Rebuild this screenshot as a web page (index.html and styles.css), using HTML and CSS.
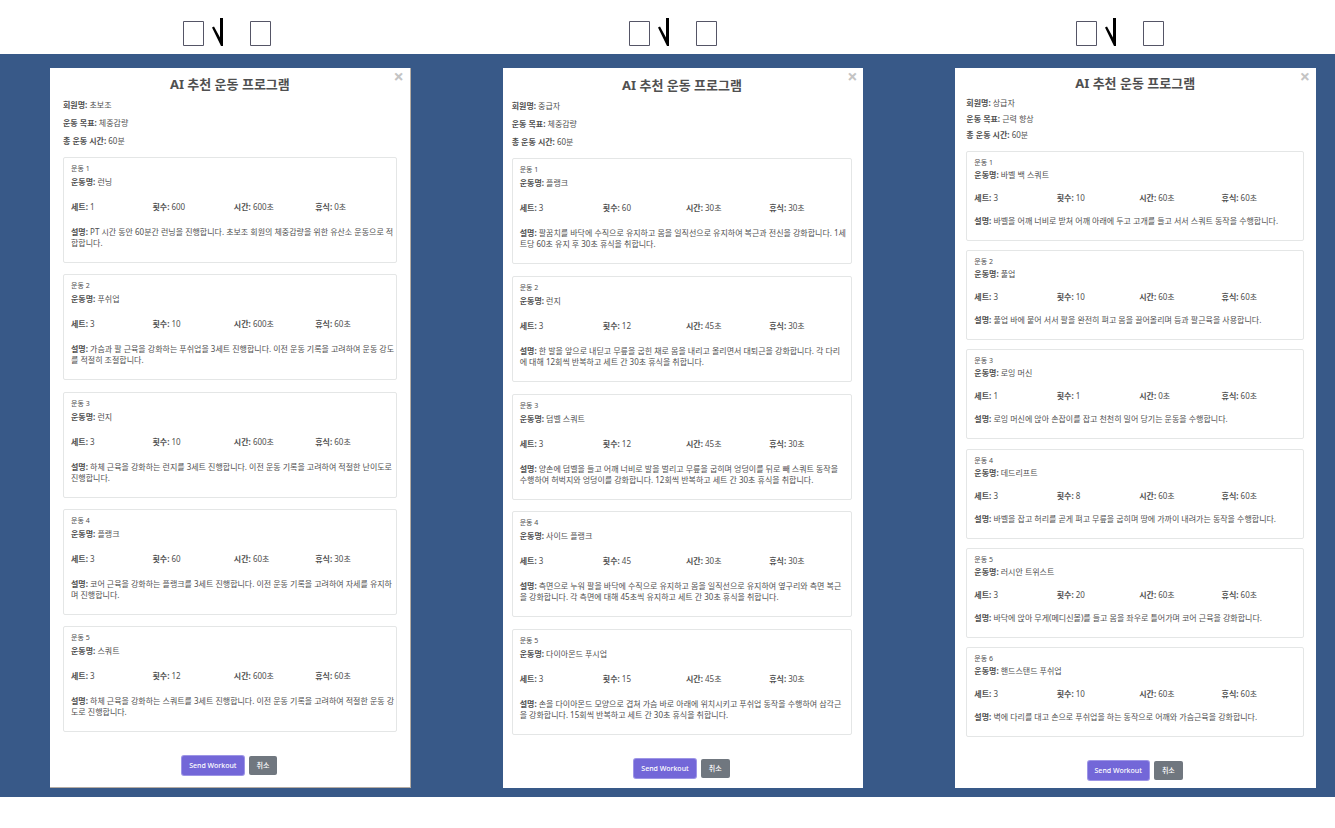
FILE: index.html
```
<!DOCTYPE html>
<html lang="ko">
<head>
  <meta charset="UTF-8" />
  <meta name="viewport" content="width=device-width, initial-scale=1.0"/>
  <title>AI 추천 운동 프로그램</title>
  <link rel="stylesheet" href="styles.css">
</head>
<body>
  <svg width="0" height="0" class="defs">
    <symbol id="level" viewBox="0 0 90 30">
      <path d="M1.5 3.5h20v24h-20zM68.5 3.5h20v24h-20z" fill="none" stroke="#555566" stroke-width="1"/>
      <path d="M30 9.500l2-1 6 11V0h3v28h-2z" fill="#000"/>
    </symbol>
  </svg>

  <header class="levels">
    <svg class="level"><use href="#level"/></svg>
    <svg class="level"><use href="#level"/></svg>
    <svg class="level"><use href="#level"/></svg>
  </header>

  <main class="board">
    <section class="modal beginner">
      <button class="close" aria-label="닫기">×</button>
      <h2>AI 추천 운동 프로그램</h2>
      <div class="info">
        <p><b>회원명:</b> 초보조</p>
        <p><b>운동 목표:</b> 체중감량</p>
        <p><b>총 운동 시간:</b> 60분</p>
      </div>
      <div class="list">
        <article class="card">
          <h3>운동 1</h3>
          <p><b>운동명:</b> 런닝</p>
          <div class="stats"><span><b>세트:</b> 1</span><span><b>횟수:</b> 600</span><span><b>시간:</b> 600초</span><span><b>휴식:</b> 0초</span></div>
          <p class="desc"><b>설명:</b> PT 시간 동안 60분간 런닝을 진행합니다. 초보조 회원의 체중감량을 위한 유산소 운동으로 적합합니다.</p>
        </article>
        <article class="card">
          <h3>운동 2</h3>
          <p><b>운동명:</b> 푸쉬업</p>
          <div class="stats"><span><b>세트:</b> 3</span><span><b>횟수:</b> 10</span><span><b>시간:</b> 600초</span><span><b>휴식:</b> 60초</span></div>
          <p class="desc"><b>설명:</b> 가슴과 팔 근육을 강화하는 푸쉬업을 3세트 진행합니다. 이전 운동 기록을 고려하여 운동 강도를 적절히 조절합니다.</p>
        </article>
        <article class="card">
          <h3>운동 3</h3>
          <p><b>운동명:</b> 런지</p>
          <div class="stats"><span><b>세트:</b> 3</span><span><b>횟수:</b> 10</span><span><b>시간:</b> 600초</span><span><b>휴식:</b> 60초</span></div>
          <p class="desc"><b>설명:</b> 하체 근육을 강화하는 런지를 3세트 진행합니다. 이전 운동 기록을 고려하여 적절한 난이도로 진행합니다.</p>
        </article>
        <article class="card">
          <h3>운동 4</h3>
          <p><b>운동명:</b> 플랭크</p>
          <div class="stats"><span><b>세트:</b> 3</span><span><b>횟수:</b> 60</span><span><b>시간:</b> 60초</span><span><b>휴식:</b> 30초</span></div>
          <p class="desc"><b>설명:</b> 코어 근육을 강화하는 플랭크를 3세트 진행합니다. 이전 운동 기록을 고려하여 자세를 유지하며 진행합니다.</p>
        </article>
        <article class="card">
          <h3>운동 5</h3>
          <p><b>운동명:</b> 스쿼트</p>
          <div class="stats"><span><b>세트:</b> 3</span><span><b>횟수:</b> 12</span><span><b>시간:</b> 600초</span><span><b>휴식:</b> 60초</span></div>
          <p class="desc"><b>설명:</b> 하체 근육을 강화하는 스쿼트를 3세트 진행합니다. 이전 운동 기록을 고려하여 적절한 운동 강도로 진행합니다.</p>
        </article>
      </div>
      <div class="actions">
        <button class="send">Send Workout</button>
        <button class="cancel">취소</button>
      </div>
    </section>

    <section class="modal middle">
      <button class="close" aria-label="닫기">×</button>
      <h2>AI 추천 운동 프로그램</h2>
      <div class="info">
        <p><b>회원명:</b> 중급자</p>
        <p><b>운동 목표:</b> 체중감량</p>
        <p><b>총 운동 시간:</b> 60분</p>
      </div>
      <div class="list">
        <article class="card">
          <h3>운동 1</h3>
          <p><b>운동명:</b> 플랭크</p>
          <div class="stats"><span><b>세트:</b> 3</span><span><b>횟수:</b> 60</span><span><b>시간:</b> 30초</span><span><b>휴식:</b> 30초</span></div>
          <p class="desc"><b>설명:</b> 팔꿈치를 바닥에 수직으로 유지하고 몸을 일직선으로 유지하여 복근과 전신을 강화합니다. 1세트당 60초 유지 후 30초 휴식을 취합니다.</p>
        </article>
        <article class="card">
          <h3>운동 2</h3>
          <p><b>운동명:</b> 런지</p>
          <div class="stats"><span><b>세트:</b> 3</span><span><b>횟수:</b> 12</span><span><b>시간:</b> 45초</span><span><b>휴식:</b> 30초</span></div>
          <p class="desc"><b>설명:</b> 한 발을 앞으로 내딛고 무릎을 굽힌 채로 몸을 내리고 올리면서 대퇴근을 강화합니다. 각 다리에 대해 12회씩 반복하고 세트 간 30초 휴식을 취합니다.</p>
        </article>
        <article class="card">
          <h3>운동 3</h3>
          <p><b>운동명:</b> 덤벨 스쿼트</p>
          <div class="stats"><span><b>세트:</b> 3</span><span><b>횟수:</b> 12</span><span><b>시간:</b> 45초</span><span><b>휴식:</b> 30초</span></div>
          <p class="desc"><b>설명:</b> 양손에 덤벨을 들고 어깨 너비로 발을 벌리고 무릎을 굽히며 엉덩이를 뒤로 빼 스쿼트 동작을 수행하여 허벅지와 엉덩이를 강화합니다. 12회씩 반복하고 세트 간 30초 휴식을 취합니다.</p>
        </article>
        <article class="card">
          <h3>운동 4</h3>
          <p><b>운동명:</b> 사이드 플랭크</p>
          <div class="stats"><span><b>세트:</b> 3</span><span><b>횟수:</b> 45</span><span><b>시간:</b> 30초</span><span><b>휴식:</b> 30초</span></div>
          <p class="desc"><b>설명:</b> 측면으로 누워 팔을 바닥에 수직으로 유지하고 몸을 일직선으로 유지하여 옆구리와 측면 복근을 강화합니다. 각 측면에 대해 45초씩 유지하고 세트 간 30초 휴식을 취합니다.</p>
        </article>
        <article class="card">
          <h3>운동 5</h3>
          <p><b>운동명:</b> 다이아몬드 푸시업</p>
          <div class="stats"><span><b>세트:</b> 3</span><span><b>횟수:</b> 15</span><span><b>시간:</b> 45초</span><span><b>휴식:</b> 30초</span></div>
          <p class="desc"><b>설명:</b> 손을 다이아몬드 모양으로 겹쳐 가슴 바로 아래에 위치시키고 푸쉬업 동작을 수행하여 삼각근을 강화합니다. 15회씩 반복하고 세트 간 30초 휴식을 취합니다.</p>
        </article>
      </div>
      <div class="actions">
        <button class="send">Send Workout</button>
        <button class="cancel">취소</button>
      </div>
    </section>

    <section class="modal advanced">
      <button class="close" aria-label="닫기">×</button>
      <h2>AI 추천 운동 프로그램</h2>
      <div class="info">
        <p><b>회원명:</b> 상급자</p>
        <p><b>운동 목표:</b> 근력 향상</p>
        <p><b>총 운동 시간:</b> 60분</p>
      </div>
      <div class="list">
        <article class="card">
          <h3>운동 1</h3>
          <p><b>운동명:</b> 바벨 백 스쿼트</p>
          <div class="stats"><span><b>세트:</b> 3</span><span><b>횟수:</b> 10</span><span><b>시간:</b> 60초</span><span><b>휴식:</b> 60초</span></div>
          <p class="desc"><b>설명:</b> 바벨을 어깨 너비로 받쳐 어깨 아래에 두고 고개를 들고 서서 스쿼트 동작을 수행합니다.</p>
        </article>
        <article class="card">
          <h3>운동 2</h3>
          <p><b>운동명:</b> 풀업</p>
          <div class="stats"><span><b>세트:</b> 3</span><span><b>횟수:</b> 10</span><span><b>시간:</b> 60초</span><span><b>휴식:</b> 60초</span></div>
          <p class="desc"><b>설명:</b> 풀업 바에 붙어 서서 팔을 완전히 펴고 몸을 끌어올리며 등과 팔근육을 사용합니다.</p>
        </article>
        <article class="card">
          <h3>운동 3</h3>
          <p><b>운동명:</b> 로잉 머신</p>
          <div class="stats"><span><b>세트:</b> 1</span><span><b>횟수:</b> 1</span><span><b>시간:</b> 0초</span><span><b>휴식:</b> 60초</span></div>
          <p class="desc"><b>설명:</b> 로잉 머신에 앉아 손잡이를 잡고 천천히 밀어 당기는 운동을 수행합니다.</p>
        </article>
        <article class="card">
          <h3>운동 4</h3>
          <p><b>운동명:</b> 데드리프트</p>
          <div class="stats"><span><b>세트:</b> 3</span><span><b>횟수:</b> 8</span><span><b>시간:</b> 60초</span><span><b>휴식:</b> 60초</span></div>
          <p class="desc"><b>설명:</b> 바벨을 잡고 허리를 곧게 펴고 무릎을 굽히며 땅에 가까이 내려가는 동작을 수행합니다.</p>
        </article>
        <article class="card">
          <h3>운동 5</h3>
          <p><b>운동명:</b> 러시안 트위스트</p>
          <div class="stats"><span><b>세트:</b> 3</span><span><b>횟수:</b> 20</span><span><b>시간:</b> 60초</span><span><b>휴식:</b> 60초</span></div>
          <p class="desc"><b>설명:</b> 바닥에 앉아 무게(메디신볼)를 들고 몸을 좌우로 틀어가며 코어 근육을 강화합니다.</p>
        </article>
        <article class="card">
          <h3>운동 6</h3>
          <p><b>운동명:</b> 핸드스탠드 푸쉬업</p>
          <div class="stats"><span><b>세트:</b> 3</span><span><b>횟수:</b> 10</span><span><b>시간:</b> 60초</span><span><b>휴식:</b> 60초</span></div>
          <p class="desc"><b>설명:</b> 벽에 다리를 대고 손으로 푸쉬업을 하는 동작으로 어깨와 가슴근육을 강화합니다.</p>
        </article>
      </div>
      <div class="actions">
        <button class="send">Send Workout</button>
        <button class="cancel">취소</button>
      </div>
    </section>
  </main>
</body>
</html>
```
FILE: styles.css
```
* { box-sizing: border-box; }
body {
  font-family: "Noto Sans", "Noto Sans CJK KR", sans-serif;
  font-size: 8px; line-height: 11px; color: #505050;
  background: white; margin: 0; padding-bottom: 31px;
  min-height: 100vh; display: flex; flex-direction: column;
}
h2, h3, p { margin: 0; }
.defs { position: absolute; }

.levels {
  display: grid; grid-template-columns: repeat(3, 1fr); gap: 16px;
  justify-items: center; padding: 18px 0 6px 12px;
}
.level { display: block; width: 90px; height: 30px; }

.board {
  flex: 1; display: grid; grid-template-columns: repeat(3, 1fr); gap: 92px;
  padding: 14px 19px 9px 50px; background: #385988;
}
.modal {
  position: relative; display: flex; flex-direction: column;
  padding: 9px 11px 9px 9px; background: white;
}
.modal h2 {
  font-size: 13px; line-height: 16px; text-align: center;
}
.close {
  position: absolute; top: 1px; right: 5px;
  width: 12px; height: 14px; padding: 0; border: none; background: none;
  font-family: inherit; font-size: 18px; font-weight: bold; line-height: 14px; color: #c4c4c4;
  cursor: pointer;
}
.info { padding: 7px 0 11px; display: grid; gap: 7px; }
.list {
  flex: 1; display: flex; flex-direction: column; justify-content: space-between;
}
.card {
  padding: 5px 7px 14px; border: 1px solid #e4e6e6; border-radius: 2px;
}
.card h3 { font-size: 7px; font-weight: normal; line-height: 11px; margin-bottom: 2px; }
.stats {
  display: grid; grid-template-columns: repeat(4, 1fr);
  margin: 14px -8px 14px 0;
}
.actions {
  display: flex; justify-content: center; align-items: center; gap: 5px;
  padding-top: 24px;
}
.actions button {
  height: 19px; padding: 0 8px; border: none; border-radius: 2px;
  font-family: inherit; font-size: 7px; font-weight: 500; line-height: 11px;
  color: white; cursor: pointer;
}
.actions .send { padding: 0 7px; background: #7367d8; box-shadow: 0 0 0 1px #9d95e6; }
.actions .cancel { background: #70777f; }

.beginner {
  padding: 8px 13px 12px; border-right: 1px solid #b5aca3; border-bottom: 1px solid #b5aca3;
}
.beginner .desc { margin-right: -6px; }
.middle { padding-bottom: 10px; }
.middle .desc { margin-right: -2px; }
.advanced { padding: 7px 12px 8px 11px; }
.advanced .info { padding: 6px 0 11px; gap: 5px; }
.advanced .card h3 { margin-bottom: 1px; }
.advanced .stats { margin: 12px -8px 12px 0; }
```
